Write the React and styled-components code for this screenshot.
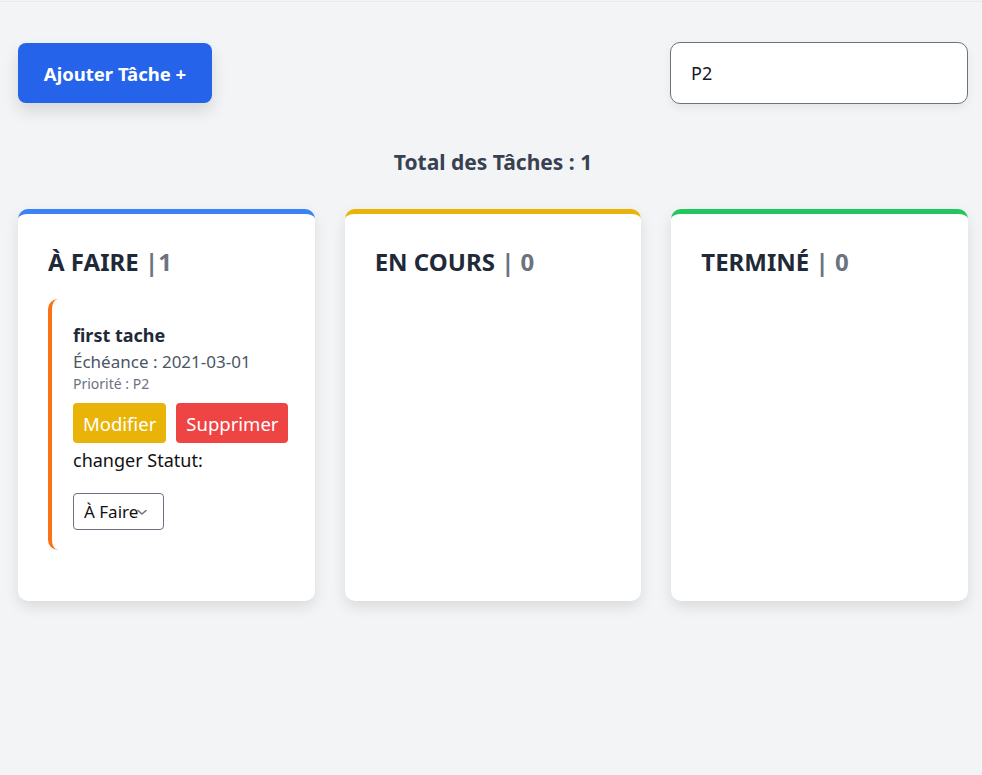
import React from 'react';
import styled, { createGlobalStyle } from 'styled-components';

const GlobalStyle = createGlobalStyle`
  html, body {
    margin: 0;
    padding: 0;
    background: #f3f4f6;
    font-family: "Noto Sans", "Open Sans", sans-serif;
  }
  body {
    border-top: 1px solid #efe3ef;
    margin-top: 1px;
  }
`;

const columns = [
  { key: 'todo', title: 'À FAIRE', sep: '|', accent: '#3b82f6', tasks: [
    { title: 'first tache', due: '2021-03-01', priority: 'P2' },
  ] },
  { key: 'doing', title: 'EN COURS', sep: '| ', accent: '#eab308', tasks: [] },
  { key: 'done', title: 'TERMINÉ', sep: '| ', accent: '#22c55e', tasks: [] },
];

export default function App() {
  const total = columns.reduce((n, c) => n + c.tasks.length, 0);
  return (
    <>
      <GlobalStyle />
      <Page>
        <Toolbar>
          <AddButton>Ajouter Tâche +</AddButton>
          <Search defaultValue='P2' />
        </Toolbar>
        <Total>Total des Tâches : {total}</Total>
        <Board>
          {columns.map((col) => (
            <Column key={col.key} $accent={col.accent}>
              <ColumnTitle>
                {col.title} <Count>{col.sep}{col.tasks.length}</Count>
              </ColumnTitle>
              {col.tasks.map((t) => (
                <TaskCard key={t.title}>
                  <TaskTitle>{t.title}</TaskTitle>
                  <Due>Échéance : {t.due}</Due>
                  <Priority>Priorité : {t.priority}</Priority>
                  <Actions>
                    <ActionButton $bg='#eab308'>Modifier</ActionButton>
                    <ActionButton $bg='#ef4444'>Supprimer</ActionButton>
                  </Actions>
                  <StatusLabel>changer Statut:</StatusLabel>
                  <SelectWrap>
                    <StatusSelect defaultValue='todo'>
                      <option value='todo'>À Faire</option>
                      <option value='doing'>En Cours</option>
                      <option value='done'>Terminé</option>
                    </StatusSelect>
                    <Chevron viewBox='0 0 12 12'>
                      <path d='M2 4.5 L6 8 L10 4.5' fill='none' stroke='#6b7280' strokeWidth='1.6' strokeLinecap='round' strokeLinejoin='round' />
                    </Chevron>
                  </SelectWrap>
                </TaskCard>
              ))}
            </Column>
          ))}
        </Board>
      </Page>
    </>
  );
}

const Page = styled.div`
  padding: 40px 14px 40px 18px;
`;

const Toolbar = styled.div`
  display: flex;
  justify-content: space-between;
  align-items: center;
`;

const AddButton = styled.button`
  height: 60px;
  width: 194px;
  border: none;
  border-radius: 8px;
  background: #2563eb;
  color: #fff;
  font-family: inherit;
  font-size: 18.5px;
  font-weight: 700;
  box-shadow: 0 8px 16px rgba(0, 0, 0, 0.12);
  cursor: pointer;
`;

const Search = styled.input`
  box-sizing: border-box;
  width: 298px;
  height: 62px;
  padding: 0 20px;
  border: 1px solid #6b7280;
  border-radius: 10px;
  background: #fff;
  font-family: inherit;
  font-size: 18px;
  color: #111827;
  box-shadow: 0 4px 8px rgba(0, 0, 0, 0.06);
  outline: none;
`;

const Total = styled.h2`
  margin: 44px 0 33px;
  text-align: center;
  font-size: 21px;
  font-weight: 700;
  color: #374151;
`;

const Board = styled.div`
  display: grid;
  grid-template-columns: repeat(3, 1fr);
  gap: 30px;
`;

const Column = styled.div`
  min-height: 392px;
  box-sizing: border-box;
  padding: 31px 25px 50px 30px;
  background: #fff;
  border-top: 5px solid ${(p) => p.$accent};
  border-radius: 10px;
  box-shadow: 0 6px 14px rgba(0, 0, 0, 0.1);
`;

const ColumnTitle = styled.h3`
  margin: 0 0 21px;
  font-size: 24px;
  font-weight: 700;
  color: #1f2937;
`;

const Count = styled.span`
  color: #6b7280;
`;

const TaskCard = styled.div`
  padding: 24px 0 20px 21px;
  border-left: 4px solid #f97316;
  border-radius: 10px 0 0 10px;
`;

const TaskTitle = styled.div`
  font-size: 18px;
  font-weight: 700;
  color: #1f2937;
`;

const Due = styled.div`
  margin-top: 3px;
  font-size: 17px;
  color: #4b5563;
`;

const Priority = styled.div`
  margin-top: 1px;
  font-size: 14px;
  color: #6b7280;
`;

const Actions = styled.div`
  display: flex;
  gap: 10px;
  margin-top: 10px;
`;

const ActionButton = styled.button`
  height: 40px;
  padding: 0 10px;
  border: none;
  border-radius: 4px;
  background: ${(p) => p.$bg};
  color: #fff;
  font-family: inherit;
  font-size: 18.5px;
  cursor: pointer;
`;

const StatusLabel = styled.div`
  margin: 5px 0 21px;
  font-size: 18px;
  color: #111;
`;

const SelectWrap = styled.div`
  position: relative;
  display: inline-block;
  vertical-align: top;
`;

const StatusSelect = styled.select`
  appearance: none;
  box-sizing: border-box;
  width: 91px;
  height: 37px;
  padding: 0 0 0 10px;
  border: 1px solid #6b7280;
  border-radius: 4px;
  background: #fff;
  font-family: inherit;
  font-size: 17px;
  color: #111;
  display: block;
`;

const Chevron = styled.svg`
  position: absolute;
  left: 63px;
  top: 13px;
  width: 12px;
  height: 12px;
  pointer-events: none;
`;
